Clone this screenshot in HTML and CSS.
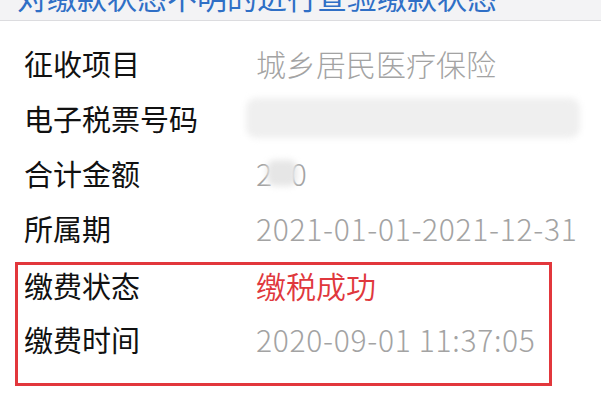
FILE: index.html
```html
<!DOCTYPE html>
<html lang="zh-CN">
<head>
<meta charset="utf-8">
<link rel="stylesheet" href="styles.css">
</head>
<body>
<div class="banner"><span class="banner-text">对缴款状态不明的进行查验缴款状态</span></div>
<div class="list">
  <div class="row"><span class="label">征收项目</span><span class="value">城乡居民医疗保险</span></div>
  <div class="row"><span class="label">电子税票号码</span><span class="value"><span class="blur-wide"></span></span></div>
  <div class="row"><span class="label">合计金额</span><span class="value num">2<span class="blur-small"></span>0</span></div>
  <div class="row"><span class="label">所属期</span><span class="value num">2021-01-01-2021-12-31</span></div>
  <div class="box">
    <div class="row row-a"><span class="label">缴费状态</span><span class="value red">缴税成功</span></div>
    <div class="row row-b"><span class="label">缴费时间</span><span class="value num">2020-09-01 11:37:05</span></div>
  </div>
</div>
</body>
</html>
```
FILE: styles.css
```css
html, body {
  margin: 0;
  padding: 0;
  background: #ffffff;
  font-family: "Noto Sans CJK SC", "Noto Sans", sans-serif;
  overflow: hidden;
}
.banner {
  height: 20px;
  background: #f3f3f5;
  border-bottom: 1px solid #dcdcdf;
  overflow: hidden;
}
.banner-text {
  display: block;
  margin-top: -24px;
  padding-left: 17px;
  font-size: 30px;
  line-height: 40px;
  color: #2f6fc6;
  white-space: nowrap;
}
.list {
  padding-top: 14px;
}
.row {
  display: flex;
  align-items: center;
  height: 55px;
  padding-left: 24px;
  white-space: nowrap;
}
.label {
  width: 232px;
  flex: none;
  color: #111111;
  font-size: 29px;
}
.value {
  color: #a3a3a3;
  font-size: 30px;
  font-weight: 300;
  display: flex;
  align-items: center;
}
.num {
  letter-spacing: 0.7px;
}
.red {
  color: #e0383d;
  font-weight: 350;
}
.box {
  margin: 7px 0 0 15px;
  width: 531px;
  height: 118px;
  border: 3px solid #e2373c;
}
.box .row {
  padding-left: 6px;
}
.row-a {
  height: 40px;
}
.row-b {
  height: 68px;
}
.blur-wide {
  display: block;
  width: 334px;
  height: 40px;
  margin-left: -10px;
  background: #efefef;
  border-radius: 10px;
  filter: blur(3px);
}
.blur-small {
  display: inline-block;
  width: 30px;
  height: 26px;
  margin: 0 -6px;
  background: #e6e6e6;
  border-radius: 8px;
  filter: blur(3px);
}
```
